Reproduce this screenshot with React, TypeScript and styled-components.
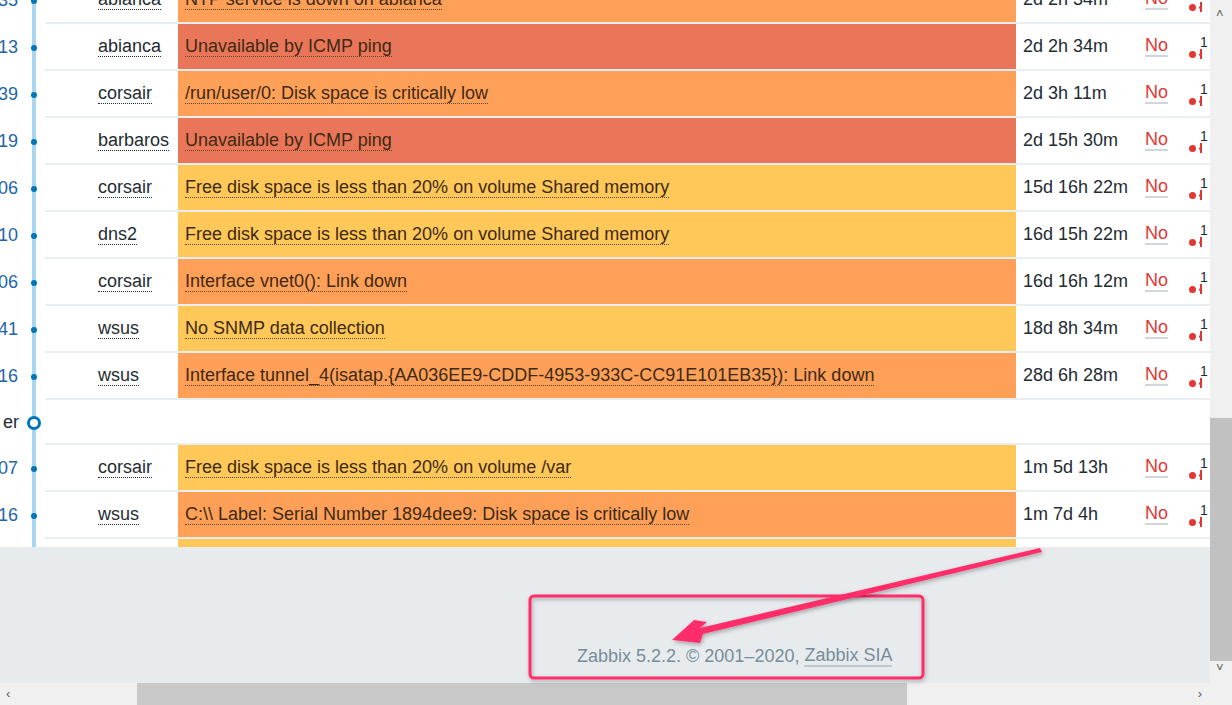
import React from "react";
import styled, { createGlobalStyle } from "styled-components";

const Global = createGlobalStyle`
  html, body { margin: 0; padding: 0; overflow: hidden; }
  body { font-family: "Liberation Sans", Arial, sans-serif; font-size: 18px; color: #1f2c33; }
`;

const Shell = styled.div`
  width: 1232px; height: 705px; position: relative; overflow: hidden;
  display: grid; grid-template-columns: 1210px 22px; grid-template-rows: 683px 22px;
`;
const Viewport = styled.div`
  overflow: hidden; background: #e8ebed; display: flex; flex-direction: column;
`;
const Table = styled.div`
  background: #fff; margin-top: -23px; display: flex; flex-direction: column;
`;
const Row = styled.div<{ $h?: number }>`
  display: grid; grid-template-columns: 45px 1fr;
  height: ${p => p.$h ?? 47}px; position: relative;
`;
const TimeCell = styled.div`
  position: relative; display: flex; align-items: center;
  color: #1f65a6;
  &::before { content: ""; position: absolute; left: 32px; top: 0; bottom: 0; width: 4px; background: #a8d6f0; }
`;
const TimeText = styled.span` position: absolute; right: 27px; `;
const Dot = styled.span<{ $group?: boolean }>`
  position: absolute; left: ${p => (p.$group ? 27 : 31)}px;
  width: ${p => (p.$group ? 8 : 6)}px; height: ${p => (p.$group ? 8 : 6)}px;
  border-radius: 50%; background: ${p => (p.$group ? "#fff" : "#0275b8")};
  border: ${p => (p.$group ? "3px solid #0275b8" : "none")};
`;
const Cells = styled.div<{ $plain?: boolean }>`
  display: grid; grid-template-columns: 133px 838px 122px 45px 27px;
  border-bottom: ${p => (p.$plain ? "none" : "2px solid #ebeef0")};
`;
const Host = styled.div`
  display: flex; align-items: center; padding-left: 53px; color: #1f2c33;
`;
const Dotted = styled.span`
  border-bottom: 1px dotted currentColor; line-height: 19px;
`;
const Problem = styled.div<{ $c: string }>`
  background: ${p => p.$c}; display: flex; align-items: center; padding-left: 7px; color: #3d2a12;
  white-space: nowrap; overflow: hidden;
`;
const ProblemText = styled.span` border-bottom: 1px dotted #5a4528; line-height: 19px; `;
const Dur = styled.div` display: flex; align-items: center; padding-left: 7px; color: #1f2c33; white-space: nowrap; `;
const Ack = styled.div` display: flex; align-items: center; padding-left: 7px; color: #e33734; `;
const AckText = styled.span` border-bottom: 2px solid #cfd6dc; line-height: 19px; `;
const Act = styled.div` position: relative; `;
const ActIcon = styled.div`
  position: absolute; left: 6px; top: 10px; width: 20px; height: 26px;
  font-size: 14px; color: #1f2c33;
  &::before { content: "1"; position: absolute; left: 11px; top: 0; }
  &::after { content: ""; position: absolute; left: 0; top: 17px; width: 7px; height: 7px; border-radius: 50%; background: #e33734; box-shadow: 8px 0 0 -2px #e33734; }
`;
const Dash = styled.span` position: absolute; left: 11px; top: 15px; width: 2px; height: 10px; background: #e33734; `;
const GroupLabel = styled.div`
  position: relative; display: flex; align-items: center;
  &::before { content: ""; position: absolute; left: 32px; top: 0; bottom: 0; width: 4px; background: #a8d6f0; }
`;
const GroupText = styled.span` position: absolute; right: 26px; color: #1f2c33; `;
const GroupRest = styled.div` border-bottom: 2px solid #ebeef0; `;
const Footer = styled.div`
  flex: 1; display: flex; align-items: flex-end;
  padding: 0 0 16px 577px; color: #768d99; font-size: 18px; white-space: nowrap;
`;
const FooterLink = styled.span` border-bottom: 2px solid #bfc8ce; line-height: 19px; `;
const VScroll = styled.div`
  background: #f0f0f0; position: relative;
  &::after { content: ""; position: absolute; left: 0; right: 0; top: 418px; height: 243px; background: #c1c1c1; }
`;
const ScrollArrow = styled.span<{ $pos: string }>`
  position: absolute; ${p => p.$pos}; font-size: 13px; color: #606060; z-index: 1;
`;
const HScroll = styled.div`
  grid-column: 1 / 3; background: #f0f0f0; position: relative;
  &::after { content: ""; position: absolute; top: 0; bottom: 0; left: 137px; width: 770px; background: #c8c8c8; }
`;
const Overlay = styled.svg` position: absolute; left: 0; top: 0; pointer-events: none; `;

type R = { t: string; host: string; p: string; c: string; d: string };
const O = "#ffa059", RED = "#e97659", Y = "#ffc859";
const rows1: R[] = [
  { t: "35", host: "abianca", p: "NTP service is down on abianca", c: O, d: "2d 2h 34m" },
  { t: "13", host: "abianca", p: "Unavailable by ICMP ping", c: RED, d: "2d 2h 34m" },
  { t: "39", host: "corsair", p: "/run/user/0: Disk space is critically low", c: O, d: "2d 3h 11m" },
  { t: "19", host: "barbaros", p: "Unavailable by ICMP ping", c: RED, d: "2d 15h 30m" },
  { t: "06", host: "corsair", p: "Free disk space is less than 20% on volume Shared memory", c: Y, d: "15d 16h 22m" },
  { t: "10", host: "dns2", p: "Free disk space is less than 20% on volume Shared memory", c: Y, d: "16d 15h 22m" },
  { t: "06", host: "corsair", p: "Interface vnet0(): Link down", c: O, d: "16d 16h 12m" },
  { t: "41", host: "wsus", p: "No SNMP data collection", c: Y, d: "18d 8h 34m" },
  { t: "16", host: "wsus", p: "Interface tunnel_4(isatap.{AA036EE9-CDDF-4953-933C-CC91E101EB35}): Link down", c: O, d: "28d 6h 28m" },
];
const rows2: R[] = [
  { t: "07", host: "corsair", p: "Free disk space is less than 20% on volume /var", c: Y, d: "1m 5d 13h" },
  { t: "16", host: "wsus", p: "C:\\\\ Label: Serial Number 1894dee9: Disk space is critically low", c: O, d: "1m 7d 4h" },
];

const ProblemRow = ({ r }: { r: R }) => (
  <Row>
    <TimeCell><TimeText>{r.t}</TimeText><Dot /></TimeCell>
    <Cells>
      <Host><Dotted>{r.host}</Dotted></Host>
      <Problem $c={r.c}><ProblemText>{r.p}</ProblemText></Problem>
      <Dur>{r.d}</Dur>
      <Ack><AckText>No</AckText></Ack>
      <Act><ActIcon><Dash /></ActIcon></Act>
    </Cells>
  </Row>
);

export default function App() {
  return (
    <Shell>
      <Global />
      <Viewport>
        <Table>
          {rows1.map((r, i) => <ProblemRow key={i} r={r} />)}
          <Row $h={45}>
            <GroupLabel><GroupText>er</GroupText><Dot $group /></GroupLabel>
            <GroupRest />
          </Row>
          {rows2.map((r, i) => <ProblemRow key={"b" + i} r={r} />)}
          <Row $h={8}>
            <TimeCell />
            <Cells $plain>
              <div /><Problem $c={Y} /><div /><div /><div />
            </Cells>
          </Row>
        </Table>
        <Footer>Zabbix 5.2.2. © 2001–2020,&nbsp;<FooterLink>Zabbix SIA</FooterLink></Footer>
      </Viewport>
      <VScroll>
        <ScrollArrow $pos="top: 6px; left: 6px">˄</ScrollArrow>
        <ScrollArrow $pos="bottom: 8px; left: 6px">˅</ScrollArrow>
      </VScroll>
      <HScroll>
        <ScrollArrow $pos="left: 6px; top: 3px">‹</ScrollArrow>
        <ScrollArrow $pos="right: 30px; top: 3px">›</ScrollArrow>
      </HScroll>
      <Overlay width="1232" height="705" viewBox="0 0 1232 705">
        <defs>
          <filter id="sh" x="-10%" y="-10%" width="120%" height="120%">
            <feDropShadow dx="1" dy="2" stdDeviation="2" floodColor="#000" floodOpacity="0.3" />
          </filter>
        </defs>
        <rect x="530" y="596" width="393" height="82" rx="4" fill="none" stroke="#ff2e6a" strokeWidth="3" filter="url(#sh)" />
        <path d="M1040 548 L700 628 L707 622 L694 620 L672 640 L700 643 L703 634 L1042 552 Z" fill="#ff2e6a" filter="url(#sh)" />
      </Overlay>
    </Shell>
  );
}
